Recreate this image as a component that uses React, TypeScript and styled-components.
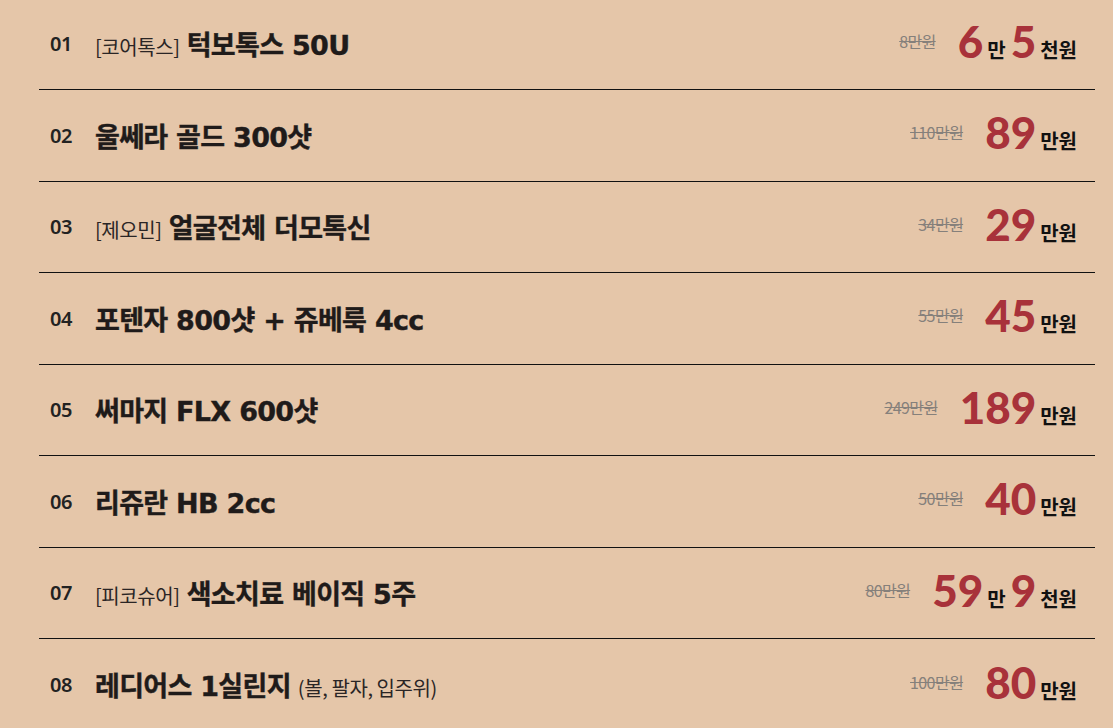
import React from 'react';
import styled, { createGlobalStyle } from 'styled-components';

/* data */
interface Item {
  no: string
  tag?: string
  title: string
  note?: string
  old: string
  price: [string, string][] // [숫자, 단위]
}

const items: Item[] = [
  { no: '01', tag: '[코어톡스]', title: '턱보톡스 50U', old: '8만원', price: [['6', '만'], ['5', '천원']] },
  { no: '02', title: '울쎄라 골드 300샷', old: '110만원', price: [['89', '만원']] },
  { no: '03', tag: '[제오민]', title: '얼굴전체 더모톡신', old: '34만원', price: [['29', '만원']] },
  { no: '04', title: '포텐자 800샷 + 쥬베룩 4cc', old: '55만원', price: [['45', '만원']] },
  { no: '05', title: '써마지 FLX 600샷', old: '249만원', price: [['189', '만원']] },
  { no: '06', title: '리쥬란 HB 2cc', old: '50만원', price: [['40', '만원']] },
  { no: '07', tag: '[피코슈어]', title: '색소치료 베이직 5주', old: '80만원', price: [['59', '만'], ['9', '천원']] },
  { no: '08', title: '레디어스 1실린지', note: '(볼, 팔자, 입주위)', old: '100만원', price: [['80', '만원']] },
]

export default function App() {
  return (
    <>
      <GlobalStyle />
      <List>
        {items.map(item => (
          <Row key={item.no}>
            <No>{item.no}</No>
            <Title>
              {item.tag && <Sub>{item.tag}</Sub>}
              <Main>{item.title}</Main>
              {item.note && <Sub>{item.note}</Sub>}
            </Title>
            <Old>{item.old}</Old>
            <Price>
              {item.price.map(([num, unit]) => (
                <React.Fragment key={num + unit}>
                  <Num>{num}</Num>
                  <Unit>{unit}</Unit>
                </React.Fragment>
              ))}
            </Price>
          </Row>
        ))}
      </List>
    </>
  )
}

/* style */
const GlobalStyle = createGlobalStyle`
  html, body {
    margin: 0;
    padding: 0;
    background: #e5c6a9;
    overflow: hidden;
  }
  body {
    font-family: "Noto Sans", "Noto Sans CJK KR", sans-serif;
    color: #1f1b1a;
  }
`

const List = styled.ul`
  list-style: none;
  margin: -1.5px 18px 0 39px;
  padding: 0;
`

const Row = styled.li`
  box-sizing: border-box;
  height: 91.5px;
  display: flex;
  align-items: center;
  padding: 0 18px 0 11px;
  border-bottom: 1px solid #111;

  &:last-child {
    border-bottom: none;
  }
`

const No = styled.span`
  width: 45px;
  flex: none;
  font-size: 20px;
  font-weight: 600;
  color: #222;
  letter-spacing: -0.4px;
`

const Title = styled.div`
  flex: 1;
  display: flex;
  align-items: baseline;
  gap: 7px;
`

const Sub = styled.span`
  font-family: "Noto Sans CJK KR", sans-serif;
  font-size: 20px;
  font-weight: 400;
  color: #2a2525;
  letter-spacing: -0.4px;
`

const Main = styled.span`
  font-family: "DejaVu Sans", "Noto Sans CJK KR", sans-serif;
  font-size: 27px;
  font-weight: 700;
  color: #1f1b1a;
  letter-spacing: -0.7px;
  -webkit-text-stroke: 0.4px #1f1b1a;
`

const Old = styled.span`
  font-family: "Noto Sans CJK KR", sans-serif;
  font-size: 16px;
  color: #85807b;
  text-decoration: line-through;
  letter-spacing: -0.6px;
  margin-right: 22px;
  margin-top: -6px;
`

const Price = styled.div`
  display: flex;
  align-items: baseline;
  margin-top: -5px;
`

const Num = styled.span`
  font-family: "Lato", sans-serif;
  font-size: 44px;
  font-weight: 900;
  color: #a8323a;
  line-height: 1;
  margin-right: 4px;
`

const Unit = styled.span`
  font-family: "Noto Sans CJK KR", sans-serif;
  font-size: 20px;
  font-weight: 700;
  color: #111;
  margin-right: 5px;

  &:last-child {
    margin-right: 0;
  }
`
